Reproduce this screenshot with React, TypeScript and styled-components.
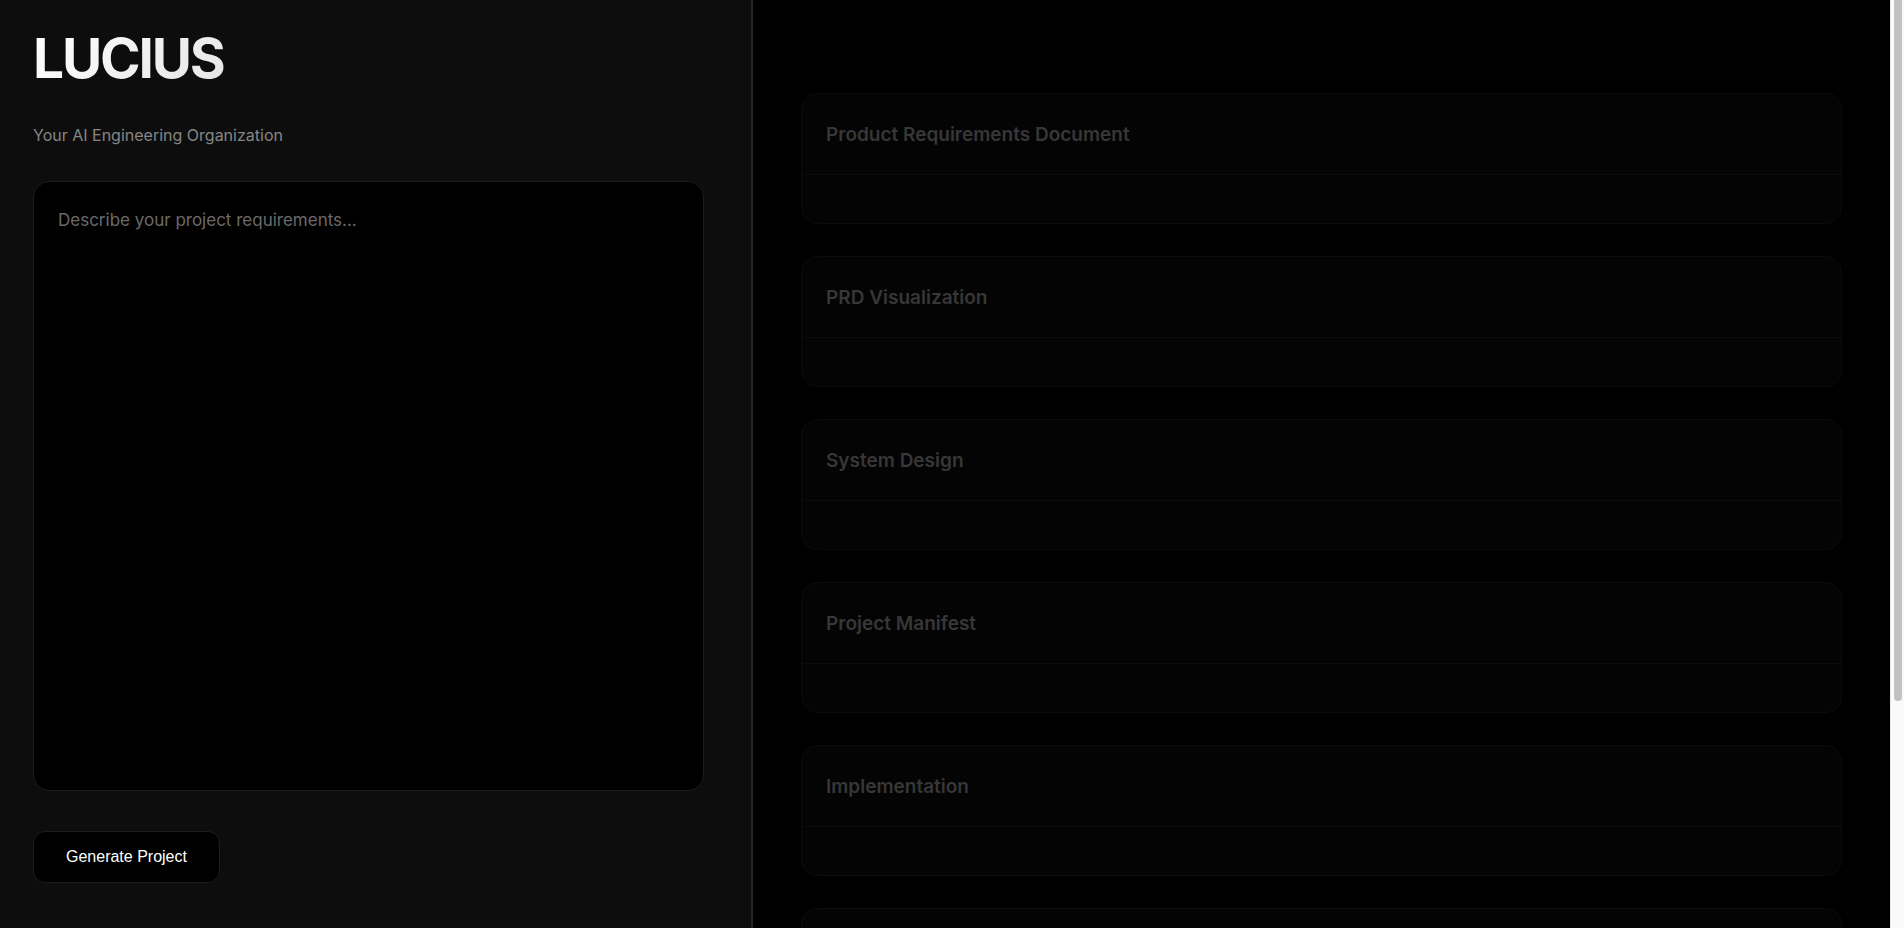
import React from 'react';
import styled, { createGlobalStyle } from 'styled-components';

const GlobalStyle = createGlobalStyle`
  * { box-sizing: border-box; }
  body {
    margin: 0;
    background: #000;
    color: #fff;
    font-family: Inter, "Liberation Sans", sans-serif;
    font-size: 16px;
    line-height: 24px;
    -webkit-font-smoothing: antialiased;
  }
`;

const Layout = styled.div`
  display: flex;
  height: 100vh;
  overflow: hidden;
`;

const Workspace = styled.div`
  flex: 1;
  min-width: 0;
  display: grid;
  grid-template-columns: 251fr 379fr;
`;

const Sidebar = styled.aside`
  display: flex;
  flex-direction: column;
  padding: 24px 47px 45px 33px;
  background: #0d0d0d;
  border-right: 2px solid #242424;
`;

const Title = styled.h1`
  margin: 0 0 31px;
  padding-right: 4px;
  align-self: flex-start;
  font-size: 55px;
  line-height: 68px;
  font-weight: 700;
  letter-spacing: -0.04em;
  background: linear-gradient(135deg, #fff 0%, #e5e5e7 100%);
  background-clip: text;
  -webkit-background-clip: text;
  color: transparent;
`;

const Tagline = styled.p`
  margin: 0 0 34px;
  color: #868686;
`;

const PromptForm = styled.form`
  flex: 1;
  display: flex;
  flex-direction: column;
  align-items: flex-start;
  gap: 40px;
`;

const Prompt = styled.textarea`
  flex: 1;
  width: 100%;
  padding: 24px;
  resize: none;
  outline: none;
  color: #fff;
  background: #000;
  border: 1px solid #1d1d1f;
  border-radius: 16px;
  font-family: inherit;
  font-size: 17px;
  line-height: 28px;

  &::placeholder { color: #6a6a6a; }
`;

const GenerateButton = styled.button`
  padding: 16px 32px;
  color: #fff;
  background: #000;
  border: 1px solid #1d1d1f;
  border-radius: 12px;
  font: 16px/18px "Liberation Sans", Arial, sans-serif;
  cursor: pointer;
`;

const Results = styled.main`
  display: flex;
  flex-direction: column;
  gap: 32px;
  padding: 93px 48px 48px;
  overflow: hidden;
`;

const Card = styled.section`
  flex: none;
  min-height: 131px;
  background: #040404;
  border: 1px solid #0b0b0b;
  border-radius: 16px;
`;

const CardHeader = styled.header`
  padding: 24px 24px 22px;
  border-bottom: 1px solid #0b0b0b;
`;

const CardTitle = styled.h2`
  margin: 0;
  font-size: 19px;
  line-height: 34px;
  font-weight: 600;
  color: #373737;
`;

const CardBody = styled.div`
  padding: 24px;
`;

const ScrollTrack = styled.div`
  flex: none;
  width: 14px;
  padding: 0 2px 0 3px;
  background: #fafafa;
  border-left: 1px solid #e8e8e8;
`;

const ScrollThumb = styled.div`
  height: 75.5%;
  background: #c1c1c1;
  border-radius: 0 0 4px 4px;
`;

const sections = [
  'Product Requirements Document',
  'PRD Visualization',
  'System Design',
  'Project Manifest',
  'Implementation',
];

export default function App() {
  return (
    <Layout>
      <GlobalStyle />
      <Workspace>
        <Sidebar>
          <Title>LUCIUS</Title>
          <Tagline>Your AI Engineering Organization</Tagline>
          <PromptForm onSubmit={(event) => event.preventDefault()}>
            <Prompt aria-label="Project requirements" placeholder="Describe your project requirements..." />
            <GenerateButton type="submit">Generate Project</GenerateButton>
          </PromptForm>
        </Sidebar>
        <Results>
          {sections.map((name) => (
            <Card key={name}>
              <CardHeader>
                <CardTitle>{name}</CardTitle>
              </CardHeader>
              <CardBody />
            </Card>
          ))}
          <Card />
        </Results>
      </Workspace>
      <ScrollTrack aria-hidden="true">
        <ScrollThumb />
      </ScrollTrack>
    </Layout>
  );
}
